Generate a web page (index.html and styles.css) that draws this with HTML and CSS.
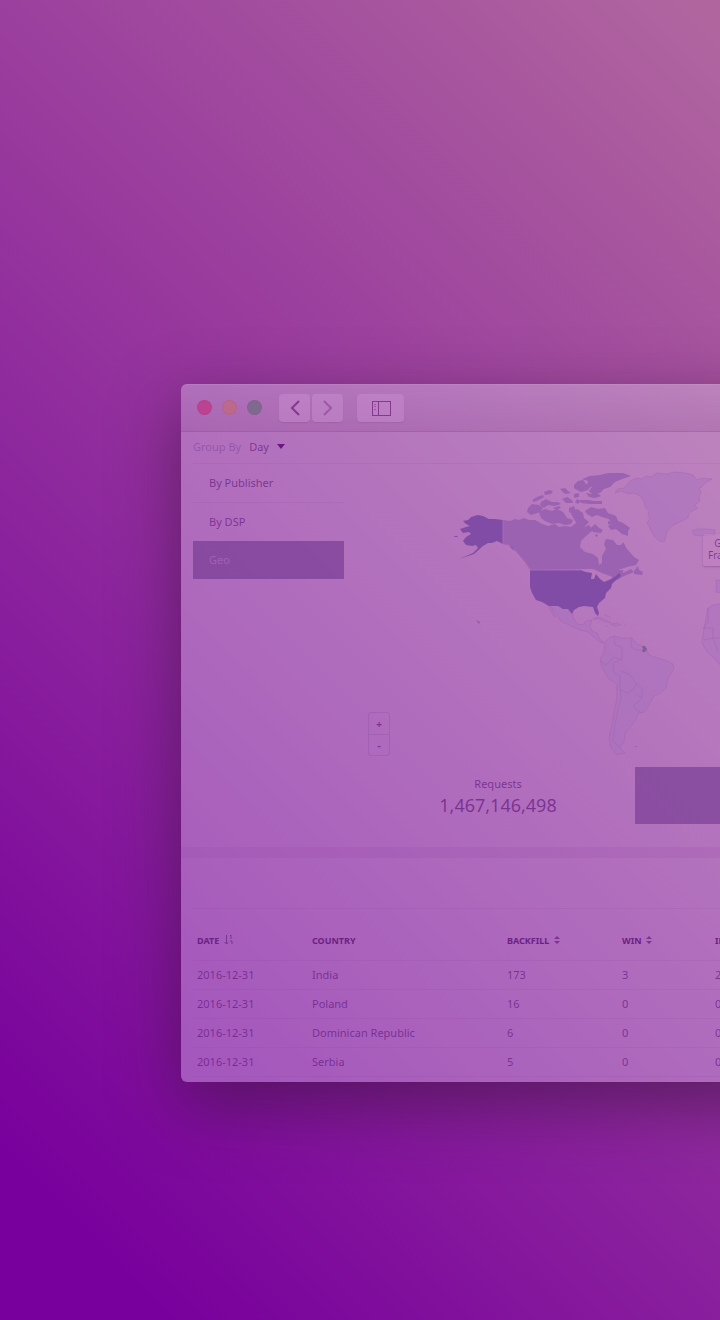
FILE: index.html
```html
<!DOCTYPE html>
<html lang="en">
<head>
<meta charset="utf-8">
<title>Geo report</title>
<link rel="stylesheet" href="styles.css">
</head>
<body>
<main class="stage">
  <div class="window">
    <header class="titlebar">
      <div class="lights"><span class="light red"></span><span class="light amber"></span><span class="light green"></span></div>
      <div class="nav">
        <button class="tool" aria-label="Back"><svg width="12" height="18" viewBox="0 0 12 18"><path d="M10 2 3 9l7 7"/></svg></button>
        <button class="tool faint" aria-label="Forward"><svg width="12" height="18" viewBox="0 0 12 18"><path d="m2 2 7 7-7 7"/></svg></button>
      </div>
      <button class="tool wide" aria-label="Show sidebar"><svg class="thin" width="20" height="16" viewBox="0 0 20 16"><path d="M1 1h18v14H1zM7 1v14"/><path class="dots" d="M3 4h2M3 6.500h2M3 9h2"/></svg></button>
    </header>
    <section class="report">
      <div class="groupby"><span class="muted">Group By</span><button class="pick">Day <svg width="8" height="5" viewBox="0 0 8 5"><path d="M0 0h8L4 5z"/></svg></button></div>
      <div class="columns">
        <nav class="side">
          <a href="#publisher">By Publisher</a>
          <a href="#dsp">By DSP</a>
          <a href="#geo" class="active">Geo</a>
        </nav>
        <div class="main">
          <div class="map">
            <svg class="world" viewBox="361 464 548 303" role="img" aria-label="World map">
              <g class="land">
                <path d="M615 493l3-4 6-1 6-7 7-3 5 1 4-3 5 1 6-4 10 1 7-2 12 1 7 2 4 5 6-2 9 1-7 4-3 4-3 1 2 5-2 3 1 5-5 4 3 3-4 2-5 3-1 5-8 4-8 4-5 6-3 10-5-1-5-5-4-8-3-5 3-5-2-2 1-5-4-4-1-6-4-5-6-3-6 1-7-3z"/>
                <path d="M692 531l5-2 10 0 8 1 0 5-6 0-8 1-7-1z"/>
                <path d="M543 599l7 3 10 0 5 3 7 6 1 6 4 7 6 1 3-4 6-1-2 6 2 5 5 2 3 7 4 2-3 1-7-6-6-5-8-2-9-4-10-5-5-8-6-8 6 12-2-1-7-11z"/>
                <path d="M593 619l5-2 6 2 7 4-6-1-6-3zM611 624l6-1 4 2-7 1zM604 614l3 2 4 2M605 626h3M624 625h2"/>
                <path d="M605 642L610 637 615 636 620 638 632 638 637 644 645 647 649 655 655 657 665 660 673 664 674 669 668 678 666 688 660 693 653 697 649 705 644 712 638 713 636 720 630 727 625 733 624 742 620 748 625 753 617 755 611 748 609 738 612 725 614 712 617 698 617 684 608 678 602 667 600 660 604 652z"/>
                <path class="line" d="M614 636l1 9 7 2 0 12M600 661l6 4 8-8 8 3M632 638l-1 8 4 4 8 0 5 0M622 659l-9 4 1 10 6 3 0 10M620 686l1 12-3 12-3 15-2 16 7 7M620 689l7 4 7-4 2-6-7-9-9-3M636 683l6 6 0 9-7-4M642 698l-9 8 8 7"/>
                <path d="M708 608l5-3 12-2v62h-5l-5-6-8-7-5-9 2-14z"/>
                <path class="line" d="M708 608v14l-5 6 10 0 0 10 9 0M704 640l9-2 5 14"/>
                <path d="M716 580l8 0v13l-8-1z"/>
              </g>
              <g class="tint">
                <path d="M503 520l7 1 5-2 4 1 5-2 5 2 6 0 7 4 6 2 7-2 4 3 6-1 6 1 5-4 7 0 2 4 4-2 4 5-7 6-5 5-1 6 5 5 8 2 5 4 1 7 3-2 0-7 4-7-2-5 2-5 7 1 4 5 4 0 2-3 4 7 7 8 5 3-3 5-9 2-9 3 5 0 0 3 8-4 3 3-10 4-7 4-7-4-8-3-9-4L531 570 526 563 520 556 514 549 509 545 503 544z"/>
                <path d="M634 571l4-5 1 4 4 2-1 3-8-1zM528 508l4-4 7 1 4 3-3 4-6 2-3 1-4-3zM539 512l6-3 7 2 5-2 6 3 4 6 6 2-2 4-6 1-6-2-7 1-7-3-4-3zM532 500l5-3 6-2 1 2-5 3-5 2zM544 492l5-2 4 1-2 3-6 1zM541 502l5-3 6 3 6 0 3 2-6 2-7-1-4 3-4-3zM560 489l5-1 3 3 3 2-6 1zM562 499l5-2 5 3 1 3-7 0zM569 508l5-2 2 5-3 3-4-2zM574 494l5-1 0 4-5 1zM577 499l4 2-3 3-3-2zM553 508l6-2 2 2-5 2zM574 485l4-4 5-1 3 4 5 2-3 4-7 2-4-2-3-2zM582 479l8-3 10-1 8-2 15 0 8 3-9 3-7 3-5 5-6 2-4 4-8 1-3-3 3-4-5-2 1-4zM586 493l5 1 6-1 4 3-6 2-6-1zM580 500l8 0 6 1 8 0 0 3-12 0-9-1zM571 514l6-5 6 4 1 5 5 4-5 5-6-2-4-6zM585 511l6-4 7 2 7-1 3 5 8 3 2 5 5 2 7 5-2 3 0 5-6-2-6-5-5 1-3-4 4-2-3-5-7-2-5-2-5 2-5-3zM591 528l4-4 4 4 4 2-2 3-8-1zM596 534l2 1-1 2-2-1zM608 521l4 1-1 3-3-1z"/>
              </g>
              <g class="solid">
                <path d="M503 520l-8-1-6 0-6-3-5-1-7 2-3 3-5 1 3 3 4 2-4 1-6 2 3 4 6-1 2 2-5 3-3 4 3 4 6 1 4-1 2 3-5 5-14 6 15-5 9-8 5-3 4 0 5-2 6 3zM454 536l3 0 1 1-3 0zM509 545l4 2 2 4-4-3z"/>
                <path d="M530 570h50l6 2 6 1-1 6 3 0 2-5 4 5 4 3 5-2 7-4 3-3 2 3-5 4-4 4-1 4-5 5-1 5-6 5-2 4 2 6-1 3-3-3-2-6-9-1-5 1-5 3-2 4-4-5-5 0-5-3-9 0-7-4-6-2-4-7-2-6z"/>
              </g>
              <path class="speck" d="M476 620l4 2-1 2zM634 746l3 0-1 1z"/>
              <path class="border" d="M503 520v24l6 1 5 4 6 7 6 7 4 7h50"/>
              <path class="guiana" d="M642 646l3 0 2 3-2 3-3 0 1-3z"/>
            </svg>
            <div class="zoom"><button aria-label="Zoom in">+</button><button aria-label="Zoom out">-</button></div>
            <div class="tip">Geo<br>France</div>
          </div>
          <div class="stats">
            <div class="stat"><span>Requests</span><strong>1,467,146,498</strong></div>
            <div class="stat chosen"></div>
          </div>
        </div>
      </div>
    </section>
    <section class="details">
      <table>
        <colgroup><col class="c-date"><col class="c-country"><col class="c-fill"><col class="c-win"><col></colgroup>
        <thead>
          <tr>
            <th>DATE <svg width="9" height="10" viewBox="0 0 9 10"><path d="M2.500 0v9M.500 7l2 2 2-2M7 0v4M6 1l1-1M6 6h2v3"/></svg></th>
            <th>COUNTRY</th>
            <th>BACKFILL <svg class="sort" width="6" height="8" viewBox="0 0 6 8"><path d="M0 3l3-3 3 3zM0 5h6L3 8z"/></svg></th>
            <th>WIN <svg class="sort" width="6" height="8" viewBox="0 0 6 8"><path d="M0 3l3-3 3 3zM0 5h6L3 8z"/></svg></th>
            <th>IMPS</th>
          </tr>
        </thead>
        <tbody>
          <tr><td>2016-12-31</td><td>India</td><td>173</td><td>3</td><td>2</td></tr>
          <tr><td>2016-12-31</td><td>Poland</td><td>16</td><td>0</td><td>0</td></tr>
          <tr><td>2016-12-31</td><td>Dominican Republic</td><td>6</td><td>0</td><td>0</td></tr>
          <tr><td>2016-12-31</td><td>Serbia</td><td>5</td><td>0</td><td>0</td></tr>
        </tbody>
      </table>
    </section>
  </div>
</main>
</body>
</html>
```
FILE: styles.css
```css
:root {
  --ink: rgba(95, 20, 125, 0.66);
  --rule: rgba(110, 40, 140, 0.08);
  --block: rgba(104, 46, 138, 0.54);
}
* { box-sizing: border-box; }
body {
  margin: 0;
  font-family: "Noto Sans", "Open Sans", sans-serif;
  font-size: 11px;
  line-height: 16px;
  color: var(--ink);
}
button { font: inherit; color: inherit; background: none; border: 0; padding: 0; }
.stage {
  min-height: 100vh;
  padding: 384px 0 238px 181px;
  overflow: hidden;
  background: linear-gradient(45deg, #78009c 8%, #b0659f 98%);
}
.window {
  min-width: 740px;
  border-radius: 6px;
  overflow: hidden;
  background: rgba(240, 238, 255, 0.32);
  box-shadow: 0 22px 66px rgba(58, 20, 62, 0.62), inset 0 1px rgba(255, 255, 255, 0.08);
}
.titlebar {
  display: flex;
  align-items: center;
  gap: 14px;
  height: 48px;
  padding: 0 16px;
  background: linear-gradient(rgba(130, 60, 130, 0.02), rgba(130, 60, 130, 0.18));
  border-bottom: 1px solid rgba(120, 50, 130, 0.3);
}
.lights { display: flex; gap: 10px; margin-right: 3px; }
.light { width: 15px; height: 15px; border-radius: 50%; border: 1px solid rgba(100, 50, 100, 0.08); }
.red { background: #bd428f; }
.amber { background: #bb6a8c; }
.green { background: #80698f; }
.nav { display: flex; gap: 2px; }
.tool {
  display: grid;
  place-items: center;
  width: 31px;
  height: 28px;
  border-radius: 4px;
  background: rgba(205, 145, 212, 0.42);
  box-shadow: 0 1px 1px rgba(110, 40, 120, 0.14);
}
.wide { width: 47px; }
.tool svg { fill: none; stroke: #84388f; stroke-width: 2; }
.tool .thin { stroke-width: 1; shape-rendering: crispEdges; }
.tool .dots { opacity: 0.6; }
.faint svg { stroke: #9c58a8; }
.report { padding: 0 12px 23px; }
.groupby {
  display: flex;
  align-items: center;
  gap: 8px;
  height: 32px;
  padding-bottom: 2px;
  border-bottom: 1px solid var(--rule);
}
.muted { color: rgba(110, 50, 145, 0.42); }
.pick { display: flex; align-items: center; gap: 8px; }
.pick svg { fill: #6a1784; }
.columns { display: flex; gap: 17px; }
.side { flex: none; width: 151px; }
.side a {
  display: flex;
  align-items: center;
  height: 39px;
  padding-left: 16px;
  color: inherit;
  text-decoration: none;
  border-bottom: 1px solid var(--rule);
}
.side a:nth-child(2) { border-color: transparent; }
.side .active {
  height: 38px;
  margin-top: -1px;
  border: 0;
  background: var(--block);
  color: rgba(185, 115, 205, 0.55);
}
.main { flex: 1 0 548px; }
.map { position: relative; }
.world { display: block; width: 548px; height: 303px; }
.land { fill: rgba(168, 112, 190, 0.42); stroke: rgba(135, 70, 150, 0.18); }
.land .line { fill: none; }
.tint { fill: #9a62b0; }
.solid { fill: #804ca6; }
.speck { fill: #945aa6; }
.border { fill: none; stroke: #ab68b4; stroke-width: 1; }
.guiana { fill: #7d6090; }
.zoom {
  position: absolute;
  left: 7px;
  bottom: 11px;
  display: grid;
  width: 22px;
  border: 1px solid rgba(115, 45, 145, 0.16);
  border-radius: 3px;
  font-size: 10px;
  font-weight: 700;
}
.zoom button { height: 21px; }
.zoom button + button { border-top: 1px solid rgba(115, 45, 145, 0.16); }
.tip {
  position: absolute;
  left: 342px;
  top: 70px;
  padding: 3px 5px 5px;
  border-radius: 2px;
  background: rgba(195, 130, 192, 0.6);
  box-shadow: 0 1px 2px rgba(100, 40, 120, 0.35);
  font-size: 10px;
  line-height: 12px;
  text-align: center;
}
.stats { display: grid; grid-template-columns: 1fr 1fr; }
.stat {
  display: flex;
  flex-direction: column;
  align-items: center;
  min-height: 57px;
  padding-top: 9px;
}
.stat strong { font-size: 18px; font-weight: 400; line-height: 26px; }
.chosen { background: var(--block); }
.details { padding: 50px 12px 5px; border-top: 11px solid rgba(140, 65, 160, 0.14); }
table { width: 100%; table-layout: fixed; border-collapse: collapse; border-top: 1px solid var(--rule); }
.c-date { width: 115px; }
.c-country { width: 195px; }
.c-fill { width: 115px; }
.c-win { width: 93px; }
th, td { padding: 0 0 0 4px; text-align: left; border-bottom: 1px solid var(--rule); }
th { height: 52px; padding-top: 13px; font-size: 9px; color: #6c2183; }
td { height: 29px; }
th svg { margin-left: 2px; vertical-align: -1px; fill: none; stroke: #7c3492; }
th .sort { fill: #7c3492; stroke: none; vertical-align: 0; }
```
